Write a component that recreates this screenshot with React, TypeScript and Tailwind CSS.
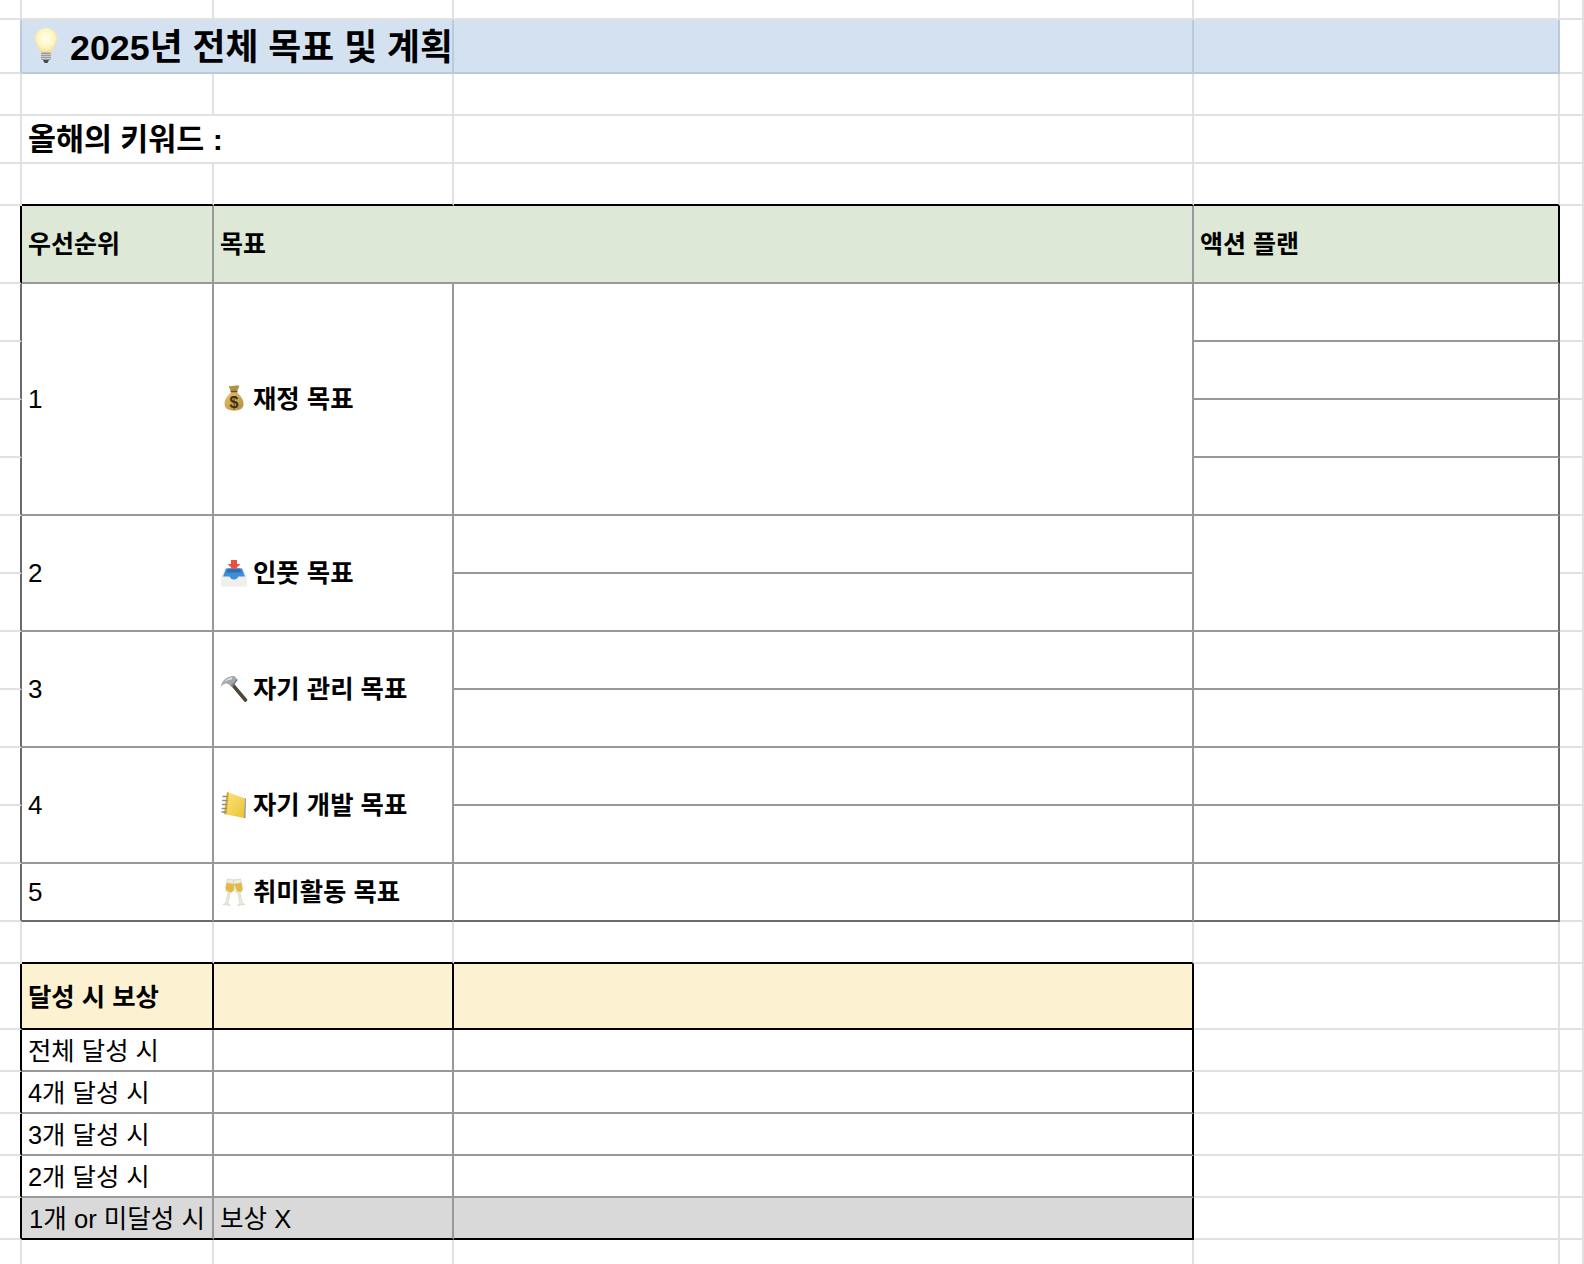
import React from 'react';
import clsx from 'clsx';

// border colours of the sheet
const RL = 'border-r-[#e1e1e1]';
const RG = 'border-r-[#999999]';
const RD = 'border-r-[#6b6b6b]';
const RK = 'border-r-black';
const RB = 'border-r-[#b9cade]';
const BL = 'border-b-[#e1e1e1]';
const BG = 'border-b-[#999999]';
const BD = 'border-b-[#6b6b6b]';
const BK = 'border-b-black';
const BB = 'border-b-[#b9cade]';

type TdProps = {
  r?: string;
  b?: string;
  className?: string;
  colSpan?: number;
  rowSpan?: number;
  children?: React.ReactNode;
};

function Td({ r = RL, b = BL, className, colSpan, rowSpan, children }: TdProps) {
  return (
    <td colSpan={colSpan} rowSpan={rowSpan} className={clsx('border-r-2 border-b-2 p-0 pl-[6px] align-middle whitespace-nowrap', r, b, className)}>
      {children}
    </td>
  );
}

function BulbIcon() {
  return (
    <svg width="26" height="38" viewBox="0 0 26 38">
      <defs>
        <radialGradient id="bulb" cx="50%" cy="42%" r="60%">
          <stop offset="0%" stopColor="#fffef0" />
          <stop offset="60%" stopColor="#fff6c4" />
          <stop offset="100%" stopColor="#f3dc8c" />
        </radialGradient>
      </defs>
      <path d="M13 1C6.500 1 2 5.800 2 11.600c0 5 3.800 8 5 12.400.3 1 .7 1.600 1.400 1.600h9.200c.7 0 1.100-.6 1.400-1.600 1.200-4.400 5-7.400 5-12.400C24 5.800 19.500 1 13 1z" fill="url(#bulb)" />
      <rect x="8" y="25.500" width="10" height="7.500" rx="1.500" fill="#9a9a9a" />
      <path d="M8 27.500h10M8 29.500h10M8 31.500h10" stroke="#d8d8d8" strokeWidth="0.800" />
      <path d="M10 33h6l-1.500 3h-3z" fill="#4a4a4a" />
    </svg>
  );
}

function MoneyBagIcon() {
  return (
    <svg width="20" height="26" viewBox="0 0 20 26" className="-mt-[2px]">
      <defs>
        <linearGradient id="bag" x1="0" y1="0" x2="1" y2="1">
          <stop offset="0%" stopColor="#e6c56f" />
          <stop offset="100%" stopColor="#b88a3a" />
        </linearGradient>
      </defs>
      <path d="M4.500 .8c1.500.8 3.500.4 5.500 0s4-.6 5.500 0l-2.500 6h-6z" fill="#b58f48" />
      <path d="M7 7.500h6c3.500 3 6.500 7 6.500 11 0 5-3.500 7-9.500 7S.5 23.500.5 18.500c0-4 3-8 6.500-11z" fill="url(#bag)" />
      <rect x="6.500" y="5.800" width="7" height="1.800" rx="0.800" fill="#6d5426" />
      <text x="10" y="22.500" textAnchor="middle" fontSize="16" fontWeight="700" fontFamily="Liberation Sans" fill="#3d3014">$</text>
    </svg>
  );
}

function InboxIcon() {
  return (
    <svg width="28" height="28" viewBox="0 0 28 28">
      <path d="M11 1h6v4h3.500L14 11 7.500 5H11z" fill="#e8503f" />
      <path d="M5 9h18l4 9v8a1.500 1.500 0 0 1-1.500 1.500h-23A1.500 1.500 0 0 1 1 26v-8z" fill="#f1efec" />
      <path d="M6 9.500h16l3 8h-6.500c-1 2-2.200 3-4.500 3s-3.500-1-4.500-3H3z" fill="#3f8fd8" />
      <path d="M8 9.500h12l1.500 4h-15z" fill="#2d6fb5" />
      <path d="M14 11 10.500 7.800h7z" fill="#e8503f" />
    </svg>
  );
}

function HammerIcon() {
  return (
    <svg width="28" height="28" viewBox="0 0 28 28">
      <path d="M10.500 10 13 7.500l14 16.500c.6.700.4 1.400-.1 1.900l-.8.800c-.6.500-1.300.5-1.900-.1z" fill="#4f463c" />
      <path d="M1 10.500C2 6.500 6 2 11 1.200c1.500-.2 3-.2 4 .4l1.500 2-5.500 7.500-3-2.200c-2-1-4.500-.2-6 1.800-.5.500-1.200.6-1-.2z" fill="#a3a8ad" />
      <path d="M4 7.500C6 4.500 9 2.500 12.500 2l-1 2.500C8.500 4.800 6 6 4 7.500z" fill="#dcdfe2" />
      <path d="m11 11 5.500-7.500 1.300 1.500-5.400 7.200z" fill="#7e8388" />
    </svg>
  );
}

function NotebookIcon() {
  return (
    <svg width="26" height="28" viewBox="0 0 26 28">
      <defs>
        <linearGradient id="nb" x1="0" y1="0" x2="1" y2="1">
          <stop offset="0%" stopColor="#fbe680" />
          <stop offset="100%" stopColor="#eec233" />
        </linearGradient>
      </defs>
      <path d="M22.500 7 25 7.500 24.500 27.500 22 26.500z" fill="#8f9aa3" />
      <path d="M6 1 24 7.500 23 27 3 23z" fill="url(#nb)" />
      <path d="M6 1 8 1.800 5.500 23.500 3 23z" fill="#dcae2a" />
      <path d="M2 5.500h4M1.800 9.500h4M1.500 13.500h4M1.300 17.500h4M1 21h4" stroke="#8d8d8d" strokeWidth="1.500" strokeLinecap="round" />
    </svg>
  );
}

function GlassesIcon() {
  return (
    <svg width="24" height="28" viewBox="0 0 24 28">
      <g transform="rotate(9 4 26)">
        <path d="M1.500 1h7.500l.5 8c.1 3-1.200 5-3.200 5.500L6 25.500l2.500 1.300H1l2.500-1.300.7-11C2 14 .9 12 1 9.500z" fill="#ecebdf" stroke="#bdbba8" strokeWidth="0.400" />
        <path d="M1.300 5h7.900l.2 4.500c0 2.500-1.200 4.300-3.200 4.300S1 12 1.100 9.500z" fill="#e3bb44" />
      </g>
      <g transform="rotate(-9 20 26)">
        <path d="M15 1h7.500l.5 8.500c.1 2.500-1 4.500-3.200 5L20.500 25.500l2.500 1.300h-7.500l2.500-1.300-.2-11c-2-.5-3.300-2.500-3.200-5.500z" fill="#ecebdf" stroke="#bdbba8" strokeWidth="0.400" />
        <path d="M14.800 5h7.900l.2 4.500c.1 2.500-1.300 4.300-3.200 4.300s-3.300-1.800-3.200-4.300z" fill="#e3bb44" />
      </g>
    </svg>
  );
}

function Goal({ icon, children }: { icon: React.ReactNode; children: React.ReactNode }) {
  return (
    <div className="flex items-center">
      <span className="flex w-[28px] justify-center mr-[5px] shrink-0">{icon}</span>
      <span className="font-bold text-[25.4px]">{children}</span>
    </div>
  );
}

function Blank({ h }: { h: string }) {
  return (
    <tr className={h}>
      <Td />
      <Td />
      <Td />
      <Td />
      <Td />
      <Td />
    </tr>
  );
}

export default function App() {
  return (
    <div className="w-[1584px] h-[1264px] overflow-hidden bg-white text-black font-['Liberation_Sans','Noto_Sans_CJK_KR',sans-serif]">
      <table className="w-[1584px] table-fixed border-separate border-spacing-0">
        <colgroup>
          <col className="w-[22px]" />
          <col className="w-[192px]" />
          <col className="w-[240px]" />
          <col className="w-[740px]" />
          <col className="w-[366px]" />
          <col className="w-[24px]" />
        </colgroup>
        <tbody>
          <Blank h="h-[20px]" />

          {/* Title */}
          <tr className="h-[54px]">
            <Td r={RB} />
            <Td colSpan={2} r={RB} b={BB} className="bg-[#d4e1f0]">
              <div className="flex items-center">
                <span className="flex w-[36px] justify-center mr-[6px] shrink-0"><BulbIcon /></span>
                <span className="font-bold text-[35.8px] leading-none pt-[6px]">2025년 전체 목표 및 계획</span>
              </div>
            </Td>
            <Td r={RB} b={BB} className="bg-[#d4e1f0]" />
            <Td r={RB} b={BB} className="bg-[#d4e1f0]" />
            <Td />
          </tr>

          <Blank h="h-[42px]" />

          <tr className="h-[48px]">
            <Td />
            <Td colSpan={2} className="font-bold text-[30.4px] leading-[36px]">올해의 키워드 :</Td>
            <Td />
            <Td />
            <Td />
          </tr>

          <tr className="h-[42px]">
            <Td />
            <Td b={BK} />
            <Td b={BK} />
            <Td b={BK} />
            <Td b={BK} />
            <Td />
          </tr>

          {/* Goals table */}
          <tr className="h-[78px] bg-[#dde8d6]">
            <Td r={RK} className="bg-white" />
            <Td r={RG} b={BG} className="font-bold text-[25px] pt-[2px]">우선순위</Td>
            <Td colSpan={2} r={RG} b={BG} className="font-bold text-[25px] pt-[2px]">목표</Td>
            <Td r={RK} b={BG} className="font-bold text-[25px] pt-[2px]">액션 플랜</Td>
            <Td className="bg-white" />
          </tr>

          <tr className="h-[58px]">
            <Td r={RD} />
            <Td rowSpan={4} r={RG} b={BG} className="text-[26px]">1</Td>
            <Td rowSpan={4} r={RG} b={BG}><Goal icon={<MoneyBagIcon />}>재정 목표</Goal></Td>
            <Td rowSpan={4} r={RG} b={BG} />
            <Td r={RD} b={BG} />
            <Td />
          </tr>
          <tr className="h-[58px]">
            <Td r={RD} />
            <Td r={RD} b={BG} />
            <Td />
          </tr>
          <tr className="h-[58px]">
            <Td r={RD} />
            <Td r={RD} b={BG} />
            <Td />
          </tr>
          <tr className="h-[58px]">
            <Td r={RD} />
            <Td r={RD} b={BG} />
            <Td />
          </tr>

          <tr className="h-[58px]">
            <Td r={RD} />
            <Td rowSpan={2} r={RG} b={BG} className="text-[26px]">2</Td>
            <Td rowSpan={2} r={RG} b={BG}><Goal icon={<InboxIcon />}>인풋 목표</Goal></Td>
            <Td r={RG} b={BG} />
            <Td rowSpan={2} r={RD} b={BG} />
            <Td />
          </tr>
          <tr className="h-[58px]">
            <Td r={RD} />
            <Td r={RG} b={BG} />
            <Td />
          </tr>

          <tr className="h-[58px]">
            <Td r={RD} />
            <Td rowSpan={2} r={RG} b={BG} className="text-[26px]">3</Td>
            <Td rowSpan={2} r={RG} b={BG}><Goal icon={<HammerIcon />}>자기 관리 목표</Goal></Td>
            <Td r={RG} b={BG} />
            <Td r={RD} b={BG} />
            <Td />
          </tr>
          <tr className="h-[58px]">
            <Td r={RD} />
            <Td r={RG} b={BG} />
            <Td r={RD} b={BG} />
            <Td />
          </tr>

          <tr className="h-[58px]">
            <Td r={RD} />
            <Td rowSpan={2} r={RG} b={BG} className="text-[26px]">4</Td>
            <Td rowSpan={2} r={RG} b={BG}><Goal icon={<NotebookIcon />}>자기 개발 목표</Goal></Td>
            <Td r={RG} b={BG} />
            <Td r={RD} b={BG} />
            <Td />
          </tr>
          <tr className="h-[58px]">
            <Td r={RD} />
            <Td r={RG} b={BG} />
            <Td r={RD} b={BG} />
            <Td />
          </tr>

          <tr className="h-[58px]">
            <Td r={RD} />
            <Td r={RG} b={BD} className="text-[26px]">5</Td>
            <Td r={RG} b={BD}><Goal icon={<GlassesIcon />}>취미활동 목표</Goal></Td>
            <Td r={RG} b={BD} />
            <Td r={RD} b={BD} />
            <Td />
          </tr>

          <tr className="h-[42px]">
            <Td />
            <Td b={BK} />
            <Td b={BK} />
            <Td b={BK} />
            <Td />
            <Td />
          </tr>

          {/* Rewards table */}
          <tr className="h-[66px]">
            <Td r={RK} />
            <Td r={RK} b={BK} className="bg-[#fcf1d0] font-bold text-[25.4px] pt-[2px]">달성 시 보상</Td>
            <Td r={RK} b={BK} className="bg-[#fcf1d0]" />
            <Td r={RK} b={BK} className="bg-[#fcf1d0]" />
            <Td />
            <Td />
          </tr>

          {['전체 달성 시', '4개 달성 시', '3개 달성 시', '2개 달성 시'].map((label) => (
            <tr key={label} className="h-[42px]">
              <Td r={RK} />
              <Td r={RG} b={BG} className="text-[25.4px] leading-[32px] pt-[1px]">{label}</Td>
              <Td r={RG} b={BG} />
              <Td r={RK} b={BG} />
              <Td />
              <Td />
            </tr>
          ))}

          <tr className="h-[42px]">
            <Td r={RK} />
            <Td r={RG} b={BK} className="bg-[#d9d9d9] text-[25.6px] leading-[32px] pt-[1px] pl-[7px]">1개 or 미달성 시</Td>
            <Td r={RG} b={BK} className="bg-[#d9d9d9] text-[25.6px] leading-[32px] pt-[1px]">보상 X</Td>
            <Td r={RK} b={BK} className="bg-[#d9d9d9]" />
            <Td />
            <Td />
          </tr>

          {/* last row runs off the bottom of the window */}
          <Blank h="h-[40px]" />
        </tbody>
      </table>
    </div>
  );
}
